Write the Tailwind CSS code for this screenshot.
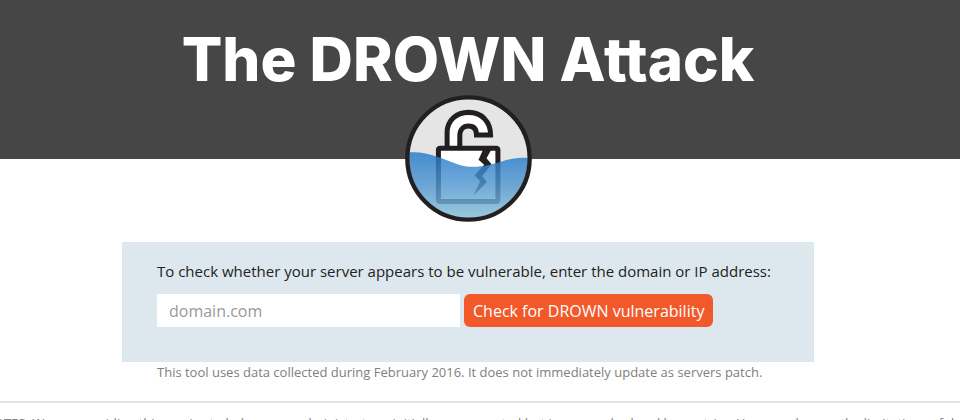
<!DOCTYPE html>
<html lang="en">
<head>
    <meta charset="UTF-8">
    <title>The DROWN Attack</title>
    <script src="https://cdn.jsdelivr.net/npm/@tailwindcss/browser@4"></script>
</head>
<body class="bg-white overflow-hidden font-['Open_Sans','Noto_Sans',sans-serif] text-[#222222]">
    <!-- Header -->
    <header class="h-[159px] bg-[#464646] pr-6 pt-6 flex flex-col items-center">
        <h1 class="text-[60px] leading-[70px] font-extrabold text-white whitespace-nowrap font-[Inter,sans-serif]">The DROWN Attack</h1>
        <svg class="w-[127px] h-[127px] mt-px shrink-0" viewBox="28 30 380 380" role="img" aria-label="DROWN logo">
            <defs>
                <linearGradient id="water" x1="0" y1="0" x2="0" y2="1">
                    <stop offset="0" stop-color="#2278cb"/>
                    <stop offset="0.5" stop-color="#5499d0"/>
                    <stop offset="1" stop-color="#91c9dc"/>
                </linearGradient>
                <clipPath id="disc"><circle cx="218" cy="220" r="178"/></clipPath>
            </defs>
            <circle cx="218" cy="220" r="182" fill="#e6e5e6"/>
            <!-- Open padlock -->
            <path d="M154 190V142C154 105 182 82 218 82C256 82 284 108 284 150H242C242 132 233 123 218 123C202 123 192 134 192 152V190Z" fill="#fff" stroke="#231f20" stroke-width="15"/>
            <rect x="128" y="189" width="178" height="160" rx="5" fill="#fff" stroke="#231f20" stroke-width="15"/>
            <path d="M263 190L248 224L265 239L236 271L253 288L233 331L273 290L259 272L287 237L272 219L288 190Z" fill="#231f20"/>
            <!-- Water -->
            <path clip-path="url(#disc)" d="M30 203C90 194 135 220 185 237C235 254 280 239 320 228C355 218 385 216 410 220V410H30Z" fill="url(#water)" opacity="0.82"/>
            <circle cx="218" cy="220" r="183" fill="none" stroke="#231f20" stroke-width="13"/>
        </svg>
    </header>

    <main>
        <div class="pr-6 pt-[83px]">
            <!-- Vulnerability check -->
            <form class="w-full max-w-[692px] mx-auto bg-[#dde8ee] px-[35px] pt-[19px] pb-[35px]">
                <label for="domain" class="block text-[15px] leading-5 mb-[13px] whitespace-nowrap">To check whether your server appears to be vulnerable, enter the domain or IP address:</label>
                <div class="flex gap-1">
                    <input id="domain" type="text" placeholder="domain.com" class="w-[303px] h-[33px] px-3 bg-white text-base placeholder:text-[#999999]">
                    <button type="button" class="h-[33px] px-[9px] rounded-md bg-[#f1592a] text-white text-base font-medium whitespace-nowrap">Check for DROWN vulnerability</button>
                </div>
            </form>
            <p class="w-full max-w-[692px] mx-auto px-[35px] text-[13px] leading-5 text-[#808080] whitespace-nowrap">This tool uses data collected during February 2016. It does not immediately update as servers patch.</p>
        </div>
        <hr class="mt-[19px] border-t-2 border-[#e2e2e2]">
        <p class="mt-2 -ml-4 text-[13px] leading-6 text-[#808080] whitespace-nowrap">NOTES: We are providing this service to help server administrators, initially we generated but is now cached and has entries. You can also see the limitations of data.</p>
    </main>
</body>
</html>
